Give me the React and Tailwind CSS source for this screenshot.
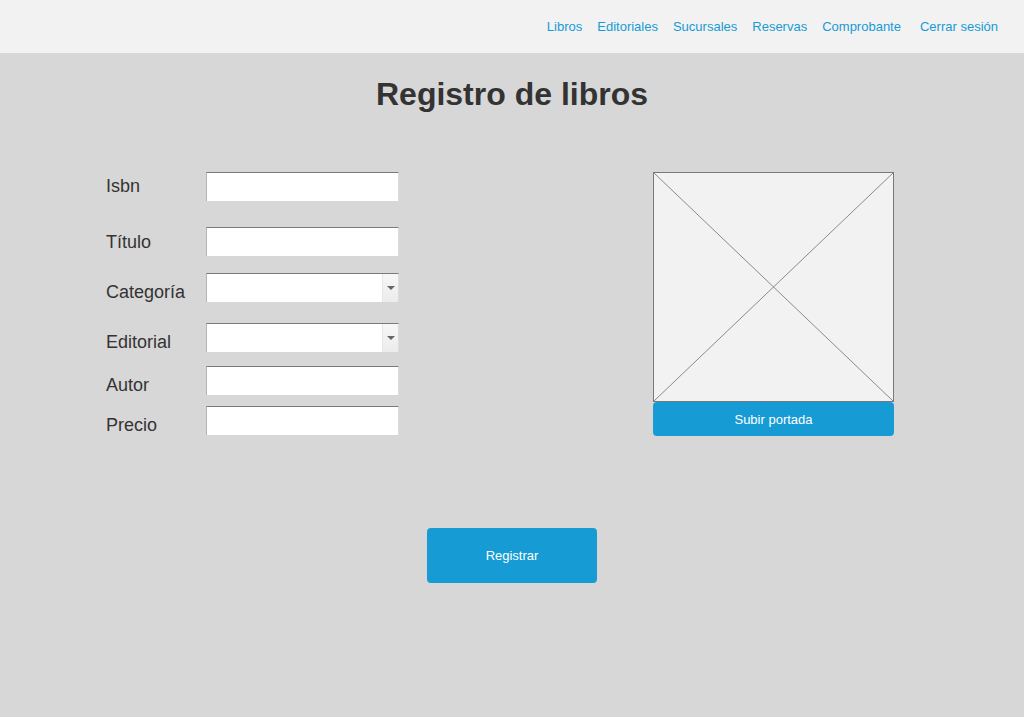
import { useState } from 'react';

const links = ['Libros', 'Editoriales', 'Sucursales', 'Reservas', 'Comprobante'];

// label offset + gap above each row come straight from the mockup
const fields = [
  { label: 'Isbn', type: 'text', mt: 'mt-0', pt: 'pt-[4px]' },
  { label: 'Título', type: 'text', mt: 'mt-[26px]', pt: 'pt-[5px]' },
  { label: 'Categoría', type: 'select', mt: 'mt-[17px]', pt: 'pt-[9px]' },
  { label: 'Editorial', type: 'select', mt: 'mt-[21px]', pt: 'pt-[9px]' },
  { label: 'Autor', type: 'text', mt: 'mt-[14px]', pt: 'pt-[9px]' },
  { label: 'Precio', type: 'text', mt: 'mt-[11px]', pt: 'pt-[9px]' },
];

const Field = ({ field, value, onChange }) => (
  <div className={`flex items-start h-[29px] ${field.mt}`}>
    <label className={`w-[100px] shrink-0 text-[18px] leading-[20px] text-[#333333] ${field.pt}`}>
      {field.label}
    </label>
    <div className="relative h-[29px] w-[193px] bg-white border-t border-t-[#7a7a7a] border-l border-l-[#b5b5b5] border-r border-r-[#dcdcdc]">
      <input
        type="text"
        value={value}
        onChange={e => onChange(e.target.value)}
        className="w-full h-full bg-transparent outline-none px-2 text-[13px]"
      />
      {field.type === 'select' && (
        <div className="absolute right-0 top-0 h-full w-[16px] bg-gradient-to-b from-[#f7f7f7] to-[#ececec] border-l border-l-[#e6e6e6] flex items-center justify-center">
          <span className="block w-0 h-0 border-l-[4px] border-r-[4px] border-t-[4px] border-l-transparent border-r-transparent border-t-[#666666]" />
        </div>
      )}
    </div>
  </div>
);

export default function App() {
  const [values, setValues] = useState({});

  return (
    <div className="min-h-screen bg-[#d7d7d7] font-['Liberation_Sans',Arial,sans-serif]">
      {/* Header */}
      <header className="h-[53px] bg-[#f2f2f2] flex items-center justify-end pr-[26px] pb-px">
        <nav className="flex items-center gap-[15px] text-[13px] text-[#169bd5]">
          {links.map(l => (
            <a key={l} href="#" className="leading-[15px]">{l}</a>
          ))}
          <a href="#" className="ml-[4px] leading-[15px]">Cerrar sesión</a>
        </nav>
      </header>

      <h1 className="mt-[23px] text-center text-[32px] leading-[37px] font-bold text-[#333333]">
        Registro de libros
      </h1>

      <div className="mt-[59px] flex justify-between pl-[106px] pr-[130px]">
        <div className="flex flex-col">
          {fields.map(f => (
            <Field
              key={f.label}
              field={f}
              value={values[f.label] || ''}
              onChange={v => setValues(prev => ({ ...prev, [f.label]: v }))}
            />
          ))}
        </div>

        <div className="flex flex-col w-[241px]">
          <div className="h-[230px] bg-[#f2f2f2] border border-[#797979]">
            <svg width="100%" height="100%" viewBox="0 0 239 228" preserveAspectRatio="none">
              <line x1="0" y1="0" x2="239" y2="228" stroke="#8a8a8a" strokeWidth="1" />
              <line x1="239" y1="0" x2="0" y2="228" stroke="#8a8a8a" strokeWidth="1" />
            </svg>
          </div>
          <button className="h-[34px] pt-[2px] bg-[#169bd5] rounded-[4px] text-white text-[13px]">
            Subir portada
          </button>
        </div>
      </div>

      <div className="mt-[92px] flex justify-center">
        <button className="w-[170px] h-[55px] bg-[#169bd5] rounded-[4px] text-white text-[13px]">
          Registrar
        </button>
      </div>
    </div>
  );
}
